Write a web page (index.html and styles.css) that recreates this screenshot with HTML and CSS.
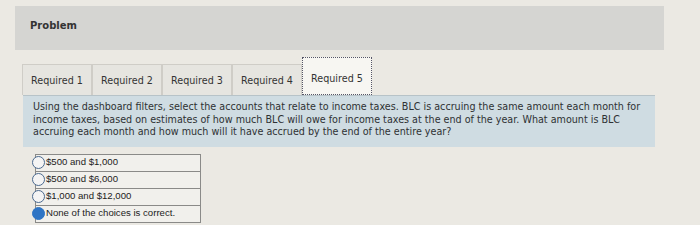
FILE: index.html
```html
<!DOCTYPE html>
<html lang="en">
<head>
    <meta charset="UTF-8">
    <title>Problem</title>
    <link rel="stylesheet" href="styles.css">
</head>
<body>
    <section class="page">
        <header class="prob-head">
            <h3>Problem</h3>
        </header>
        <nav class="tabs">
            <div class="tab">Required 1</div>
            <div class="tab">Required 2</div>
            <div class="tab">Required 3</div>
            <div class="tab">Required 4</div>
            <div class="tab active">Required 5</div>
        </nav>
        <article class="question">
            <p>
                Using the dashboard filters, select the accounts that relate to income taxes. BLC is accruing the same amount each month for<br>
                income taxes, based on estimates of how much BLC will owe for income taxes at the end of the year. What amount is BLC<br>
                accruing each month and how much will it have accrued by the end of the entire year?
            </p>
        </article>
        <table class="choices">
            <tr><td><span class="radio"></span>$500 and $1,000</td></tr>
            <tr><td><span class="radio"></span>$500 and $6,000</td></tr>
            <tr><td><span class="radio"></span>$1,000 and $12,000</td></tr>
            <tr><td><span class="radio checked"></span>None of the choices is correct.</td></tr>
        </table>
    </section>
</body>
</html>
```

FILE: styles.css
```css
body {
    margin: 0;
    background-color: #ebe9e3;
    font-family: "DejaVu Sans", Verdana, sans-serif;
    color: #2b2b2b;
}
.page {
    padding: 6px 36px 0 15px;
}
.prob-head {
    background-color: #d5d5d2;
    height: 44px;
    box-sizing: border-box;
    display: flex;
    align-items: center;
    padding: 0 0 5px 15px;
}
.prob-head h3 {
    margin: 0;
    font-size: 10px;
    font-weight: bold;
    color: #333;
}
.tabs {
    display: flex;
    margin: 7px 0 0 7px;
    height: 38px;
    align-items: flex-end;
}
.tab {
    width: 70px;
    height: 31px;
    box-sizing: border-box;
    border: 1px solid #cfcdc7;
    border-bottom: none;
    background-color: #e6e5e0;
    font-size: 9.6px;
    display: flex;
    align-items: center;
    justify-content: center;
    color: #333;
}
.tab.active {
    height: 38px;
    padding-top: 5px;
    background-color: #f7f6f2;
    border: 1px dotted #556;
}
.question {
    margin-left: 8px;
    margin-right: 9px;
    background-color: #cfdce2;
    border-top: 1px solid #b7c3c8;
    padding: 5px 4px 8px 10px;
    white-space: nowrap;
}
.question p {
    margin: 0;
    font-size: 9.6px;
    line-height: 12.5px;
    color: #2e3133;
}
.choices {
    margin: 7px 0 0 20px;
    border-collapse: collapse;
    font-family: "Liberation Sans", Arial, sans-serif;
    font-size: 9.6px;
    color: #222;
}
.choices td {
    border: 1px solid #8a8a88;
    width: 164px;
    height: 16px;
    padding: 0;
    background-color: #f1f0ec;
}
.radio {
    display: inline-block;
    width: 11px;
    height: 11px;
    border: 1px solid #4b6a8f;
    border-radius: 50%;
    background-color: #f4f4f4;
    vertical-align: middle;
    margin: -1px 1px 0 -4px;
}
.radio.checked {
    background-color: #2e74c4;
    border-color: #2e74c4;
}
```
